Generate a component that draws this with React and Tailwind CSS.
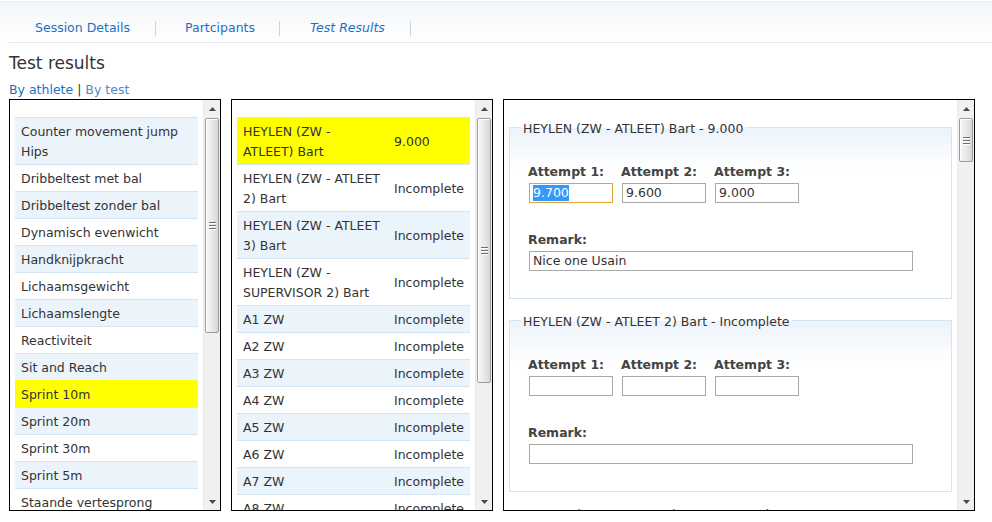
import React from "react";

const Tri = ({ down }) => (
  <svg width="7" height="4" viewBox="0 0 7 4" className="block">
    <polygon points={down ? "0,0 7,0 3.5,4" : "3.5,0 7,4 0,4"} fill="#4a4a4a" />
  </svg>
);

function Scrollbar({ thumbClass }) {
  return (
    <div className="w-[17px] shrink-0 bg-[#f0f0f0] flex flex-col border-l border-[#e9e9e9]">
      <div className="h-[17px] flex items-center justify-center">
        <Tri />
      </div>
      <div className="flex-1 pt-px px-px">
        <div
          className={
            thumbClass +
            " rounded-[2px] border border-[#9c9c9c] bg-[linear-gradient(to_right,#f7f7f7,#e6e6e6_60%,#d4d4d4)] shadow-[inset_1px_1px_0_#ffffff] flex items-center justify-center"
          }
        >
          <div className="flex flex-col gap-[1px]">
            <div className="w-[7px] h-px bg-[#6f6f6f] shadow-[0_1px_0_#ffffff]" />
            <div className="w-[7px] h-px bg-[#6f6f6f] shadow-[0_1px_0_#ffffff] mt-px" />
            <div className="w-[7px] h-px bg-[#6f6f6f] shadow-[0_1px_0_#ffffff] mt-px" />
          </div>
        </div>
      </div>
      <div className="h-[17px] flex items-center justify-center">
        <Tri down />
      </div>
    </div>
  );
}

const tests = [
  <>Counter movement jump<br />Hips</>,
  "Dribbeltest met bal",
  "Dribbeltest zonder bal",
  "Dynamisch evenwicht",
  "Handknijpkracht",
  "Lichaamsgewicht",
  "Lichaamslengte",
  "Reactiviteit",
  "Sit and Reach",
  "Sprint 10m",
  "Sprint 20m",
  "Sprint 30m",
  "Sprint 5m",
  "Staande vertesprong",
  "Tapping",
];

const athletes = [
  { n: <>HEYLEN (ZW -<br />ATLEET) Bart</>, v: "9.000" },
  { n: <>HEYLEN (ZW - ATLEET<br />2) Bart</>, v: "Incomplete" },
  { n: <>HEYLEN (ZW - ATLEET<br />3) Bart</>, v: "Incomplete" },
  { n: <>HEYLEN (ZW -<br />SUPERVISOR 2) Bart</>, v: "Incomplete" },
  { n: "A1 ZW", v: "Incomplete" },
  { n: "A2 ZW", v: "Incomplete" },
  { n: "A3 ZW", v: "Incomplete" },
  { n: "A4 ZW", v: "Incomplete" },
  { n: "A5 ZW", v: "Incomplete" },
  { n: "A6 ZW", v: "Incomplete" },
  { n: "A7 ZW", v: "Incomplete" },
  { n: "A8 ZW", v: "Incomplete" },
];

function rowBg(i, selected) {
  if (selected) return "bg-[#ffff00] border-[#ffff00]";
  return i % 2 === 0 ? "bg-[#ebf3fb] border-[#d3e4f4]" : "bg-white border-[#d3e4f4]";
}

function Field({ value, focused }) {
  return (
    <div
      className={
        "h-[20px] w-[84px] border px-[3px] flex items-center leading-[16px] " +
        (focused ? "border-[#e5a33d]" : "border-[#a9a9a9]")
      }
    >
      {focused ? <span className="bg-[#3399ff] text-white">{value}</span> : value}
    </div>
  );
}

function ResultSet({ title, a1, a2, a3, remark, first }) {
  return (
    <fieldset
      className={
        (first ? "mt-[19px] " : "mt-[13px] ") +
        "ml-[5px] w-[443px] border border-[#d5e4f1] pl-[11px] bg-[linear-gradient(#ecf3fa,#ffffff_42px)]"
      }
    >
      <legend className="px-[2px] leading-[16px] text-[#333]">
        <span className="relative top-[2px]">{title}</span>
      </legend>
      <div className="pl-[7px] pt-[29px] pb-[27px]">
        <div className="flex">
          {[
            ["Attempt 1:", a1, true],
            ["Attempt 2:", a2, false],
            ["Attempt 3:", a3, false],
          ].map(([l, v, f], i) => (
            <div key={i} className="w-[93px]">
              <div className="font-bold text-[#444] leading-[16px]">{l}</div>
              <div className="ml-px mt-[3px]">
                <Field value={v} focused={first && f} />
              </div>
            </div>
          ))}
        </div>
        <div className="mt-[29px] font-bold text-[#444] leading-[16px]">Remark:</div>
        <div className="ml-px mt-[3px] h-[20px] w-[384px] border border-[#a9a9a9] px-[3px] flex items-center leading-[16px]">
          {remark}
        </div>
      </div>
    </fieldset>
  );
}

export default function App() {
  return (
    <div className="w-[992px] h-[522px] overflow-hidden bg-white font-['DejaVu_Sans','Verdana',sans-serif] text-[12.5px] text-[#333]">
      {/* header */}
      <div className="pt-px">
        <div className="h-[42px] border-t border-[#e7ebf0] bg-[linear-gradient(#f3f6f9,#ffffff)]">
          <div className="ml-[9px] h-full border-b border-[#e5e8eb] pt-[19px]">
            <div className="flex h-[15px] items-center text-[#1e6fc4]">
              <div className="pl-[26px] pr-[25px] h-full flex items-center border-r border-[#cfd3d7]">
                Session Details
              </div>
              <div className="pl-[29px] pr-[24px] h-full flex items-center border-r border-[#cfd3d7]">
                Partcipants
              </div>
              <div className="pl-[30px] pr-[25px] h-full flex items-center border-r border-[#cfd3d7] italic">
                Test Results
              </div>
            </div>
          </div>
        </div>
      </div>

      <div className="pl-[9px]">
        <h1 className="mt-[10px] text-[17px] leading-[20px] text-[#333]">Test results</h1>
        <div className="mt-[9px] leading-[16px]">
          <span className="text-[#1f6fc2]">By athlete</span>
          <span className="text-[#333]"> | </span>
          <span className="text-[#4f8ac8]">By test</span>
        </div>

        <div className="mt-[1px] flex gap-[10px] h-[412px]">
          {/* tests */}
          <div className="w-[212px] h-full border border-black flex">
            <div className="flex-1 overflow-hidden pt-[17px] px-[5px]">
              {tests.map((t, i) => (
                <div
                  key={i}
                  className={"border-t px-[6px] pt-[4px] pb-[2px] leading-[20px] whitespace-nowrap " + rowBg(i, i === 9)}
                >
                  {t}
                </div>
              ))}
            </div>
            <Scrollbar thumbClass="h-[215px]" />
          </div>

          {/* athletes */}
          <div className="w-[262px] h-full border border-black flex">
            <div className="flex-1 overflow-hidden pt-[17px] px-[5px]">
              {athletes.map((a, i) => (
                <div
                  key={i}
                  className={"border-t grid grid-cols-[151px_1fr] items-center leading-[20px] whitespace-nowrap " + rowBg(i, i === 0)}
                >
                  <div className="px-[6px] pt-[4px] pb-[2px]">{a.n}</div>
                  <div className="px-[6px] pt-[4px] pb-[2px]">{a.v}</div>
                </div>
              ))}
            </div>
            <Scrollbar thumbClass="h-[265px]" />
          </div>

          {/* details */}
          <div className="w-[472px] h-full border border-black flex">
            <div className="flex-1 overflow-hidden">
              <ResultSet
                first
                title="HEYLEN (ZW - ATLEET) Bart - 9.000"
                a1="9.700"
                a2="9.600"
                a3="9.000"
                remark="Nice one Usain"
              />
              <ResultSet title="HEYLEN (ZW - ATLEET 2) Bart - Incomplete" a1="" a2="" a3="" remark="" />
              <ResultSet title="HEYLEN (ZW - ATLEET 3) Bart - Incomplete" a1="" a2="" a3="" remark="" />
            </div>
            <Scrollbar thumbClass="h-[44px]" />
          </div>
        </div>
      </div>
    </div>
  );
}
